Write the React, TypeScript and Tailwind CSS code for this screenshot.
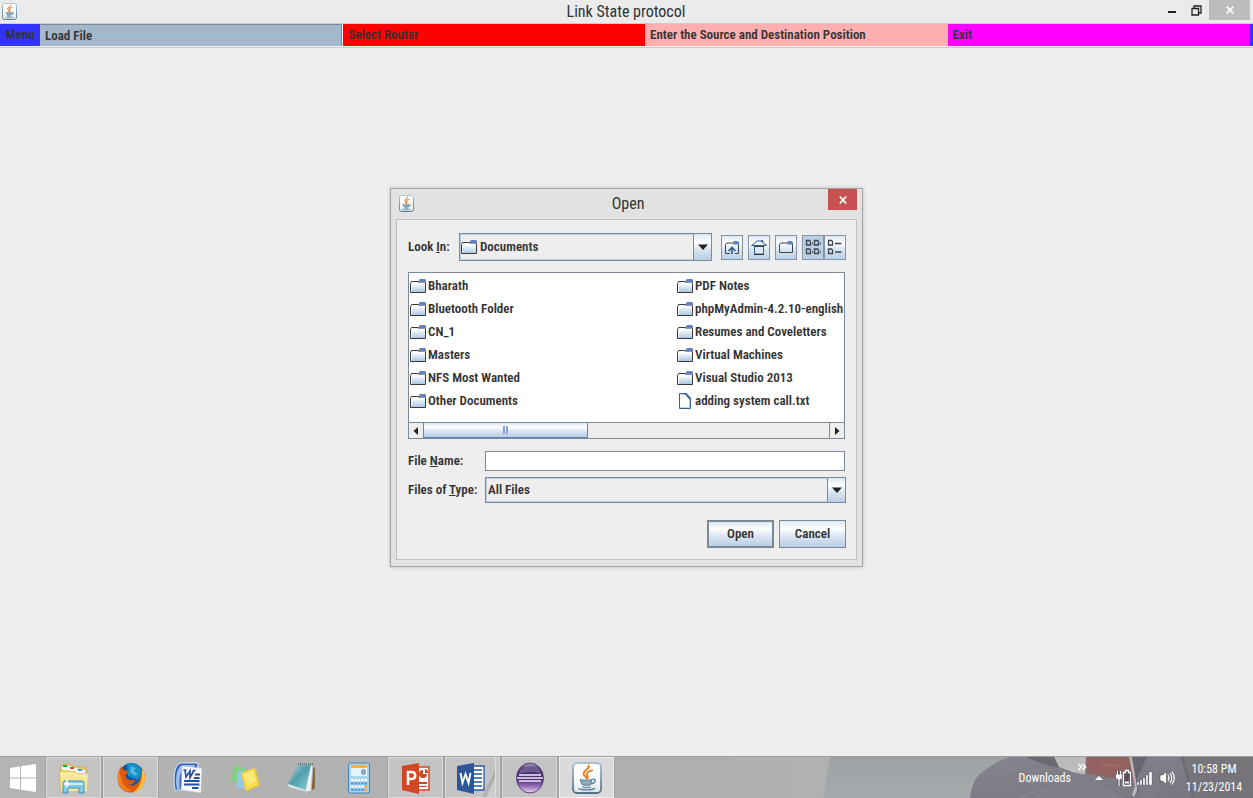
import type { ReactNode } from 'react';

const METAL = 'bg-[linear-gradient(180deg,#dde8f3_0%,#ffffff_30%,#dde8f3_55%,#b8cfe5_100%)]';
const SWING = "font-['Roboto_Condensed','Roboto',sans-serif] font-semibold text-[13px]";
const TITLE = "font-['Roboto_Condensed','Roboto',sans-serif] font-normal text-[16px] leading-6 text-[#333]";
const TRAY = "font-['Roboto_Condensed','Roboto',sans-serif] text-[12px] leading-[18px] text-white";

function JavaIcon({ className }: { className: string }) {
  return (
    <svg viewBox="0 0 30 32" className={className} preserveAspectRatio="none" aria-hidden="true">
      <defs>
        <linearGradient id="javaFace" x1="0" y1="0" x2="0" y2="1">
          <stop offset="0" stopColor="#ffffff" />
          <stop offset="0.6" stopColor="#fafafa" />
          <stop offset="1" stopColor="#dbe2e6" />
        </linearGradient>
        <linearGradient id="javaEdge" x1="0" y1="0" x2="0" y2="1">
          <stop offset="0" stopColor="#a9c0d0" />
          <stop offset="1" stopColor="#527086" />
        </linearGradient>
      </defs>
      <rect x="1" y="1" width="28" height="30" rx="4" fill="url(#javaFace)" stroke="url(#javaEdge)" strokeWidth="1.8" />
      <path d="M16.500 3.500c2 3.500-5 4.500-5 8 0 2 2.500 3 3 5M20 8.500c-3 .5-6 2.500-5 4.500.8 1.400 1.500 2 .3 3.500" fill="none" stroke="#ec7a1c" strokeWidth="1.900" strokeLinecap="round" />
      <path d="M8 17.500c3 1 9 1 12 0l-1 5c-2 1.200-7 1.200-9 0z" fill="#8fa9ba" stroke="#5b7f99" />
      <path d="M20.500 17.500c4-1 3.500 3.500-1 4.300" fill="none" stroke="#5b7f99" strokeWidth="1.500" />
      <path d="M10.500 24.800c2 1 6 1 8 0M7 26c-1 2.600 14 2.600 16 0" fill="none" stroke="#5b7f99" strokeWidth="1.300" />
    </svg>
  );
}

function FolderIcon() {
  return (
    <svg viewBox="0 0 16 14" className="h-3.5 w-4 shrink-0" aria-hidden="true">
      <defs>
        <linearGradient id="folderFill" x1="0" y1="0" x2="0" y2="1">
          <stop offset="0.15" stopColor="#ffffff" />
          <stop offset="1" stopColor="#a9c6e2" />
        </linearGradient>
      </defs>
      <path d="M.5 13.500V4.500L1.500 2.500h7l1 1h6v10z" fill="url(#folderFill)" stroke="#3a3a3a" />
      <path d="M1.500 12.500V5h13" fill="none" stroke="#fff" />
      <path d="M10 0h5l1 1v2H9V1z" fill="#6382bf" />
      <path d="M8 3.500h7.500" stroke="#8d98a8" />
    </svg>
  );
}

function FileIcon() {
  return (
    <svg viewBox="0 0 16 16" className="h-4 w-4 shrink-0" aria-hidden="true">
      <path d="M2.500.5h7l4 4.500v10.500h-11z" fill="#fff" stroke="#35618f" />
      <path d="M3.500 1.500h5M12.500 6v8.500h-9" fill="none" stroke="#b8cfe5" />
      <path d="M8.500 1l4.500 5" stroke="#35618f" strokeWidth="1.500" />
    </svg>
  );
}

function UpIcon() {
  return (
    <svg viewBox="0 0 16 15" className="h-[15px] w-4" aria-hidden="true">
      <path d="M6 13.500H1.500V4.500L3 3h6M14.500 4v9.500H11" fill="none" stroke="#444" />
      <path d="M9.500 1h4L15 2v2.500H9z" fill="#6382bf" />
      <path d="M8 14V7.500M4.500 11L8 7.500l3.500 3.500" fill="none" stroke="#35618f" strokeWidth="1.700" />
    </svg>
  );
}

function HomeIcon() {
  return (
    <svg viewBox="0 0 16 16" className="h-4 w-4" aria-hidden="true">
      <path d="M3.500 6.500h9v8.500h-9z" fill="#dce8f3" stroke="#35618f" />
      <path d="M3 15.500h10" stroke="#333" />
      <path d="M10.500 4V1.500h1.500v4" fill="#8ba6c8" stroke="#35618f" strokeWidth=".8" />
      <path d="M.5 6.500L6 2h4l5.500 4.500z" fill="#eaf2f9" stroke="#35618f" />
      <path d="M3 7.500h10" stroke="#444" />
    </svg>
  );
}

function NewFolderIcon() {
  return (
    <svg viewBox="0 0 16 14" className="h-3.5 w-4" aria-hidden="true">
      <path d="M1.500 12.500V4.500L3 3h6M14.500 4v8.500h-13" fill="none" stroke="#444" />
      <path d="M9.500 1h4L15 2v2.500H9z" fill="#6382bf" />
    </svg>
  );
}

function ListIcon() {
  return (
    <svg viewBox="0 0 16 16" className="h-4 w-4" aria-hidden="true">
      <path d="M1.500 1.500h3l1 1v3.500h-4zM9.500 1.500h3l1 1v3.500h-4zM1.500 10h3l1 1v3.500h-4zM9.500 10h3l1 1v3.500h-4zM7 4.500h1M15 4.500h1M7 13h1M15 13h1" fill="none" stroke="#3c444d" strokeWidth="1.300" />
    </svg>
  );
}

function DetailsIcon() {
  return (
    <svg viewBox="0 0 16 16" className="h-4 w-4" aria-hidden="true">
      <path d="M1.500 1.500h3l1 1v3.500h-4zM1.500 10h3l1 1v3.500h-4zM8 4.500h6.500M8 13h6.500" fill="none" stroke="#3c444d" strokeWidth="1.300" />
    </svg>
  );
}

function Triangle({ dir }: { dir: 'left' | 'right' | 'down' }) {
  const d = dir === 'left' ? 'M7 1v8L2.500 5z' : dir === 'right' ? 'M3 1v8l4.500-4z' : 'M0 2.500h10L5 8z';
  return (
    <svg viewBox="0 0 10 10" className="h-2.5 w-2.5" aria-hidden="true">
      <path d={d} fill="#222" />
    </svg>
  );
}

function ComboArrow() {
  return (
    <span className={`pointer-events-none absolute inset-y-0 right-0 flex w-[19px] items-center justify-center border border-[#7a8a99] ${METAL}`}>
      <Triangle dir="down" />
    </span>
  );
}

function ToolButton({ label, children, className = '' }: { label: string; children: ReactNode; className?: string }) {
  return (
    <button type="button" aria-label={label} className={`flex h-[25px] w-[22px] items-center justify-center border border-[#8595a5] ${className || METAL}`}>
      {children}
    </button>
  );
}

const leftFiles = ['Bharath', 'Bluetooth Folder', 'CN_1', 'Masters', 'NFS Most Wanted', 'Other Documents'];
const rightFiles = ['PDF Notes', 'phpMyAdmin-4.2.10-english', 'Resumes and Coveletters', 'Virtual Machines', 'Visual Studio 2013', 'adding system call.txt'];

function FileColumn({ names }: { names: string[] }) {
  return (
    <ul>
      {names.map((name) => (
        <li key={name} className="flex h-[23px] items-center gap-0.5 whitespace-nowrap">
          {name.endsWith('.txt') ? <FileIcon /> : <FolderIcon />}
          {name}
        </li>
      ))}
    </ul>
  );
}

function OpenDialog() {
  return (
    <section role="dialog" aria-label="Open" className="mt-[140px] flex w-[473px] flex-col border border-[#a5a5a5] bg-[#e2e2e2] px-[5px] pb-1.5 shadow-[0_0_4px_rgba(0,0,0,0.2)]">
      <header className="-mr-[5px] flex h-[30px] items-start pr-[5px]">
        <div className="flex flex-1 pl-[3px] pt-1.5">
          <JavaIcon className="h-[17px] w-[15px]" />
        </div>
        <h2 className={`pt-[3px] ${TITLE}`}>Open</h2>
        <div className="flex flex-1 justify-end">
          <button type="button" aria-label="Close dialog" className="flex h-[21px] w-[29px] items-center justify-center bg-[#c75050] text-white">
            <svg viewBox="0 0 8 8" className="h-2 w-2" aria-hidden="true">
              <path d="M.8.5l6.400 7M7.200.5l-6.400 7" stroke="currentColor" strokeWidth="1.700" />
            </svg>
          </button>
        </div>
      </header>
      <form className={`flex flex-col border border-[#c0c0c0] bg-[#eee] pb-[11px] pl-[11px] pr-2.5 pt-[13px] leading-4 text-[#333] ${SWING}`} onSubmit={(e) => e.preventDefault()}>
        <div className="flex items-center">
          <label htmlFor="look" className="w-[51px] whitespace-nowrap">Look <u>I</u>n:</label>
          <div className="relative flex-1">
            <select id="look" className="block h-7 w-full appearance-none border border-[#7a8a99] bg-[#eee] pl-5 shadow-[inset_0_0_0_1px_#b8cfe5] outline-none">
              <option>Documents</option>
            </select>
            <span className="pointer-events-none absolute inset-y-0 left-0.5 flex items-center"><FolderIcon /></span>
            <ComboArrow />
          </div>
          <div className="ml-[9px] flex gap-[5px]">
            <ToolButton label="Up one level"><UpIcon /></ToolButton>
            <ToolButton label="Home"><HomeIcon /></ToolButton>
            <ToolButton label="Create new folder"><NewFolderIcon /></ToolButton>
            <div className="flex">
              <ToolButton label="List" className="bg-[#b8cfe5]"><ListIcon /></ToolButton>
              <ToolButton label="Details"><DetailsIcon /></ToolButton>
            </div>
          </div>
        </div>
        <div className="mr-px mt-[11px] flex flex-col border border-[#7a8a99] bg-white">
          <div className="grid h-[149px] grid-cols-[267px_1fr] overflow-hidden pl-px pt-px">
            <FileColumn names={leftFiles} />
            <FileColumn names={rightFiles} />
          </div>
          <div className="flex h-4 border-t border-[#7a8a99] bg-[#eee]">
            <button type="button" aria-label="Scroll left" className="flex w-3.5 items-center justify-center"><Triangle dir="left" /></button>
            <div className="flex flex-1">
              <div className={`flex w-[165px] items-center justify-center gap-px border-x border-b border-[#6382bf] ${METAL}`}>
                <span className="h-2 w-0.5 bg-[#8aa4d6]" />
                <span className="h-2 w-0.5 bg-[#8aa4d6]" />
              </div>
            </div>
            <button type="button" aria-label="Scroll right" className="flex w-[15px] items-center justify-center border-l border-[#7a8a99]"><Triangle dir="right" /></button>
          </div>
        </div>
        <div className="mr-px mt-3 flex items-center">
          <label htmlFor="fname" className="w-[77px] whitespace-nowrap">File <u>N</u>ame:</label>
          <input id="fname" type="text" className="h-5 min-w-0 flex-1 border border-[#7a8a99] bg-white px-1 outline-none" />
        </div>
        <div className="mt-1.5 flex items-center">
          <label htmlFor="ftype" className="w-[77px] whitespace-nowrap">Files of <u>T</u>ype:</label>
          <div className="relative flex-1">
            <select id="ftype" className="block h-[26px] w-full appearance-none border border-[#7a8a99] bg-[#eee] pl-0.5 shadow-[inset_0_0_0_1px_#b8cfe5] outline-none">
              <option>All Files</option>
            </select>
            <ComboArrow />
          </div>
        </div>
        <div className="mt-[17px] flex justify-end gap-[5px]">
          <button type="submit" className={`h-7 w-[67px] border-2 border-[#7a8a99] ${METAL}`}>Open</button>
          <button type="button" className={`h-7 w-[67px] border border-[#7a8a99] ${METAL}`}>Cancel</button>
        </div>
      </form>
    </section>
  );
}

function ExplorerIcon() {
  return (
    <svg viewBox="0 0 30 32" className="h-8 w-[30px]" aria-hidden="true">
      <path d="M2 4l2-2h6l2 2h4l2 1h8l2 3v20H1V5z" fill="#e9cc62" stroke="#c8a640" strokeWidth=".7" />
      <path d="M3 4h9l1 4H3z" fill="#fff" /><path d="M4 3h4v2H4z" fill="#20ae32" />
      <path d="M10 6h8v3h-8z" fill="#fff" /><path d="M11 5h4v2h-4z" fill="#e4432d" />
      <path d="M17 8h9v3h-9z" fill="#fff" /><path d="M19 7h4v2h-4z" fill="#36a4df" />
      <path d="M1 10h14l3 2h11l-1 17H2z" fill="#f7e693" />
      <path d="M1 12h13l4 2h11" fill="none" stroke="#fff5bd" />
      <path d="M4 31V21q0-2 2-2h17q2 0 2 2v10h-5v-5H9v5z" fill="#83c8e6" stroke="#3e93be" />
      <path d="M5 21h19v2H5z" fill="#c9eef9" />
      <path d="M8 16l1 4 3 2-3 1-1 4-1-4-3-1 3-2z" fill="#fff" />
    </svg>
  );
}

function FirefoxIcon() {
  return (
    <svg viewBox="0 0 30 32" className="h-8 w-[30px]" aria-hidden="true">
      <ellipse cx="15.500" cy="15.500" rx="13" ry="14.500" fill="#14559c" />
      <path d="M11 2c8-3 14 2 15 10l-4 6-10-4z" fill="#168fc9" />
      <path d="M15 4l5 2-2 3 4 3-3 2-5-4z" fill="#53b6df" />
      <path d="M26 6c4 6 4 15-1 20-6 7-18 6-22-3C0 16 2 8 6 4l1 4 5 1c1 2-1 3-3 4l2 4c3 3 5 0 8 1.500-1 3.500-4 4.500-7 4 8 4 14-4 14-16.500z" fill="#e2590c" />
      <path d="M26 6c4 6 4 15-1 20-2 2.500-5 4-8 4.500 7-5 10-13 9-24.500z" fill="#ffc52e" />
      <path d="M3 9c2 3 1 6 3 9 1 5 4 9 10 10-8 4-17-5-13-19z" fill="#f58122" />
    </svg>
  );
}

function WordOldIcon() {
  return (
    <svg viewBox="0 0 30 32" className="h-8 w-[30px]" aria-hidden="true">
      <path d="M8 1h17l-3 27H2C0 15 1 3 8 1z" fill="#3560b0" stroke="#dfe9f7" />
      <path d="M9 3h13l-1 3H11C6 11 6 20 7 27H4C2 18 3 6 9 3z" fill="#9dbfec" />
      <path d="M9 4l20 2-1 25-20-3z" fill="#f7f9ff" stroke="#aebbd3" strokeWidth=".6" />
      <path d="M10.500 8h3M12 8l1 7 4-6 0 6.500 4-7M19.500 8.500h3" fill="none" stroke="#2351a2" strokeWidth="1.700" />
      <path d="M22 12.500h5M21 16h5.500M11 19h15.500M11 22.500h15.500M19 26h6.500" stroke="#2351a2" strokeWidth="1.800" />
    </svg>
  );
}

function StickyIcon() {
  return (
    <svg viewBox="0 0 30 32" className="h-8 w-[30px]" aria-hidden="true">
      <path d="M5 3l13 5-5 15L0 18z" fill="#83cf83" /><path d="M7 9h13v17H7z" fill="#92c8f2" />
      <path d="M11 11l14-5 4 17-13 6z" fill="#f5dc4f" stroke="#e9c338" /><path d="M13 12l10-4 3 11-8 5z" fill="#ffee91" opacity=".65" />
    </svg>
  );
}

function NotepadIcon() {
  return (
    <svg viewBox="0 0 30 32" className="h-8 w-[30px]" aria-hidden="true">
      <defs><linearGradient id="notepadFace" x2="1" y2="1"><stop stopColor="#c2e0e4" /><stop offset=".45" stopColor="#4f9eac" /><stop offset="1" stopColor="#8fd2dd" /></linearGradient></defs>
      <path d="M25 4l3 2v20l-6 5z" fill="#856743" /><path d="M23 3l3 1-2 26-6-1z" fill="#eef2f3" stroke="#a8b8bb" />
      <path d="M11 3h13l-6 25-17-6z" fill="url(#notepadFace)" stroke="#8ea9ad" strokeWidth=".5" />
      <path d="M1 22l17 6 3 2-19-5z" fill="#d7eef0" /><path d="M11 2h15" stroke="#697b7d" strokeWidth="2" strokeDasharray="1 1" />
    </svg>
  );
}

function CalcIcon() {
  return (
    <svg viewBox="0 0 24 32" className="h-8 w-6" aria-hidden="true">
      <rect x="1.500" y="1" width="21" height="30" rx="2" fill="#a9d4f1" stroke="#4484b8" /><path d="M4 3h16v3H4z" fill="#f0b441" />
      <path d="M4 6h16v8H4z" fill="#e6f3fb" /><path d="M15 8h3v4h-3zM15 10h3" fill="none" stroke="#56799b" />
      {[0, 1, 2, 3].map((r) => [0, 1, 2, 3, 4].map((c) => (
        <rect key={`${r}${c}`} x={4 + c * 3.4} y={17 + r * 3.2} width="2.500" height="2.300" fill={c === 4 && r > 1 ? '#f0a933' : r % 2 ? '#5d98c9' : '#f8fcff'} />
      )))}
    </svg>
  );
}

function PowerPointIcon() {
  return (
    <svg viewBox="0 0 30 32" className="h-8 w-[30px]" aria-hidden="true">
      <path d="M17 5h11v23H17z" fill="#fff" stroke="#d44a29" strokeWidth="1.500" />
      <path d="M22 8a4 4 0 1 0 4 4h-4z" fill="#d24625" /><path d="M24 7v4h3a4 4 0 0 0-3-4zM18 20h8v2h-8zM18 24h8v1h-8z" fill="#d24625" />
      <path d="M1 4l17-3v31L1 28z" fill="#d24625" />
      <path d="M7 23V10h3.500c5 0 5 7 0 7H7" fill="none" stroke="#fff" strokeWidth="2.500" />
    </svg>
  );
}

function WordIcon() {
  return (
    <svg viewBox="0 0 30 32" className="h-8 w-[30px]" aria-hidden="true">
      <path d="M16 4h12v24H16z" fill="#fff" stroke="#2b579a" strokeWidth="1.300" />
      <path d="M18 8h8M18 12h8M18 16h8M18 20h8M18 24h8" stroke="#2b579a" strokeWidth="1.600" />
      <path d="M1 4l17-3v31L1 28z" fill="#2b579a" />
      <path d="M4.500 11l2 10 3-9 3 9 2-10" fill="none" stroke="#fff" strokeWidth="1.900" />
    </svg>
  );
}

function EclipseIcon() {
  return (
    <svg viewBox="0 0 30 32" className="h-8 w-[30px]" aria-hidden="true">
      <defs><linearGradient id="eclipseFace" x2="0" y2="1"><stop stopColor="#b6a3cf" /><stop offset=".15" stopColor="#433066" /><stop offset=".55" stopColor="#4b2b75" /><stop offset=".8" stopColor="#9e76bf" /><stop offset="1" stopColor="#eedbf3" /></linearGradient></defs>
      <ellipse cx="15" cy="16" rx="13.500" ry="15" fill="url(#eclipseFace)" stroke="#5f437e" />
      <path d="M4 12Q5 3 15 2q10 1 11 10-11-4-22 0z" fill="#bba8cd" opacity=".35" />
      <path d="M4 13h22M2 16h26M4 19h22" stroke="#f3eef8" strokeWidth="1.300" />
    </svg>
  );
}

function TaskButton({ label, state = 'idle', children }: { label: string; state?: 'idle' | 'open' | 'stacked' | 'active'; children: ReactNode }) {
  const look = {
    idle: 'border-transparent',
    open: 'border-[#dadada] bg-[#c3c3c3] shadow-[0_0_0_1px_#a2a2a2]',
    stacked: 'border-[#dadada] bg-[linear-gradient(115deg,#c4c4c4_75%,#a9a9a9_79%,#cdcdcd_84%)] pr-1 shadow-[0_0_0_1px_#a2a2a2,inset_-3px_0_0_#c5c5c5,inset_-4px_0_0_#dedede]',
    active: 'border-[#f0f0f0] bg-[#dadada] shadow-[0_0_0_1px_#a2a2a2]',
  }[state];
  return (
    <button aria-label={label} className={`flex w-[55px] items-center justify-center border ${look}`}>
      {children}
    </button>
  );
}

function Wallpaper() {
  return (
    <svg viewBox="0 0 431 42" preserveAspectRatio="none" className="absolute inset-0 h-full w-full" aria-hidden="true">
      <defs>
        <linearGradient id="jacket" x2="1" y2="1"><stop stopColor="#85848f" /><stop offset="1" stopColor="#77757e" /></linearGradient>
        <linearGradient id="wall" x2="0" y2="1"><stop stopColor="#9da2a5" /><stop offset="1" stopColor="#a5aaad" /></linearGradient>
      </defs>
      <path d="M8 0h423v42H1z" fill="url(#wall)" />
      <path d="M148 42c2-16 6-24 20-32q10-8 22-10h241v42z" fill="url(#jacket)" />
      <path d="M232 0h32l-1 18q-14-2-26-8z" fill="#bcbcbb" /><path d="M204 0h28l5 11q-12-1-33-11z" fill="#615b63" opacity=".65" />
      <path d="M264 0h44l5 25-20-3-28-5z" fill="#946161" /><path d="M278 7q12-3 24 3-12 1-25 0z" fill="#a56a66" opacity=".6" />
      <path d="M307 0h3l6 32-4 9-2-2 3-9z" fill="#b9b7bb" /><path d="M310 0h16l-9 20 3 12-4 5z" fill="#686670" />
      <path d="M325 0l-10 23 3 19h15l5-18z" fill="#7d7c87" />
      <path d="M196 42q40-9 78-17l28 17z" fill="#817f89" /><path d="M262 25q-28 3-66 17" fill="none" stroke="#94919a" opacity=".5" />
      <path d="M167 17q25-8 52 2M185 22q25 3 42 14" fill="none" stroke="#908e98" opacity=".3" strokeWidth="2" />
      <path d="M359 0h72v42h-60z" fill="#747377" opacity=".75" /><path d="M360 0l11 42" stroke="#625f67" opacity=".5" strokeWidth="2" />
    </svg>
  );
}

function Taskbar() {
  return (
    <footer className="flex h-[42px] items-stretch border-t border-[#9d9d9d] bg-[linear-gradient(90deg,#b4b4b4,#afafaf_55%,#b7b7b7)]">
      <button aria-label="Start" className="flex w-[46px] items-center justify-center">
        <svg viewBox="0 0 26 28" className="h-7 w-[26px]" aria-hidden="true">
          <path d="M0 4l10-1.500V13.500H0zM11 2.300L26 0v13.500H11zM0 14.500h10v11L0 24zM11 14.500h15V28l-15-2.300z" fill="#fff" />
        </svg>
      </button>
      <nav aria-label="Taskbar" className="flex gap-0.5">
        <TaskButton label="File Explorer" state="open"><ExplorerIcon /></TaskButton>
        <TaskButton label="Firefox" state="open"><FirefoxIcon /></TaskButton>
        <TaskButton label="Word 2007"><WordOldIcon /></TaskButton>
        <TaskButton label="Sticky Notes"><StickyIcon /></TaskButton>
        <TaskButton label="Notepad"><NotepadIcon /></TaskButton>
        <TaskButton label="Calculator"><CalcIcon /></TaskButton>
        <TaskButton label="PowerPoint" state="open"><PowerPointIcon /></TaskButton>
        <TaskButton label="Word" state="stacked"><WordIcon /></TaskButton>
        <TaskButton label="Eclipse" state="open"><EclipseIcon /></TaskButton>
        <TaskButton label="Java" state="active"><JavaIcon className="h-8 w-[30px]" /></TaskButton>
      </nav>
      <div className={`relative ml-auto flex w-[431px] justify-end overflow-hidden ${TRAY}`}>
        <Wallpaper />
        <div className="relative flex items-stretch pr-3">
          <span className="self-center">Downloads</span>
          <button aria-label="More downloads" className="ml-1.5 self-start pt-1">
            <svg viewBox="0 0 10 8" className="mt-0.5 h-2 w-2.5" aria-hidden="true"><path d="M1.500 1l3 3-3 3M5.500 1l3 3-3 3" fill="none" stroke="#fff" strokeWidth="1.500" /></svg>
          </button>
          <div className="ml-2 flex items-center gap-1.5">
            <svg viewBox="0 0 8 5" className="mr-1.5 h-[5px] w-2" aria-hidden="true"><path d="M0 5l4-4 4 4z" fill="#fff" /></svg>
            <svg viewBox="0 0 16 18" className="h-[18px] w-4" aria-hidden="true">
              <path d="M2.500 2v4M5.500 2v4M4 9v8" stroke="#444" strokeWidth="3" />
              <path d="M2.500 2v4M5.500 2v4M4 9v8" stroke="#fff" strokeWidth="1.300" />
              <path d="M1 5.500h6v3.500l-2 1.500H3L1 9z" fill="#fff" />
              <path d="M10.500 1.500h3v2h2V16.500h-7V3.500h2z" fill="#55505a" stroke="#fff" strokeWidth="1.300" /><path d="M10 12.500h4v2h-4z" fill="#fff" />
            </svg>
            <svg viewBox="0 0 16 14" className="h-3.5 w-4" aria-hidden="true">
              <path d="M0 11h2v3H0zM3 9h2v5H3zM6 7h2v7H6zM9 4h2v10H9zM12 1h3v13h-3z" fill="#fff" stroke="#3d3b42" strokeWidth=".3" />
            </svg>
            <svg viewBox="0 0 16 16" className="h-4 w-4" aria-hidden="true">
              <path d="M1 5h2.500L7.500 1.500v13L3.500 11H1z" fill="#fff" stroke="#444" strokeWidth=".6" />
              <path d="M9 5q2 3 0 6M11 3q3.500 5 0 10M13 1.500q4.500 6.500 0 13" fill="none" stroke="#fff" strokeWidth="1.200" />
            </svg>
          </div>
          <time className="ml-3 flex w-[54px] flex-col items-center justify-center whitespace-nowrap"><span>10:58 PM</span><span>11/23/2014</span></time>
        </div>
      </div>
    </footer>
  );
}

export default function App() {
  return (
    <div className="flex min-h-screen flex-col bg-[#eee]">
      <header className="flex h-[23px] items-start bg-[#ebebeb]">
        <div className="flex flex-1 pl-0.5 pt-[3px]"><JavaIcon className="h-[17px] w-[15px]" /></div>
        <h1 className={TITLE}>Link State protocol</h1>
        <div className="flex flex-1 items-start justify-end pr-[3px]">
          <button aria-label="Minimize" className="flex h-5 w-6 items-end justify-center pb-[7px]"><span className="h-0.5 w-2 bg-[#222]" /></button>
          <button aria-label="Restore" className="mr-px flex h-5 w-6 items-center justify-center">
            <svg viewBox="0 0 11 11" className="h-[11px] w-[11px]" aria-hidden="true"><path d="M1 3.500h6.500v6.500H1zM3 3V1h7v7H8" fill="none" stroke="#222" strokeWidth="1.300" /></svg>
          </button>
          <button aria-label="Close" className="flex h-5 w-[41px] items-center justify-center bg-[#bcbcbc] text-white">
            <svg viewBox="0 0 8 8" className="h-2 w-2" aria-hidden="true"><path d="M.8.5l6.400 7M7.200.5l-6.400 7" stroke="currentColor" strokeWidth="1.700" /></svg>
          </button>
        </div>
      </header>
      <nav aria-label="Main menu" className={`grid h-[25px] grid-cols-[40px_repeat(4,1fr)_3px] border-b border-t border-[#ccc] bg-[#eee] pb-px leading-[22px] text-[#333] ${SWING}`}>
        <button className="bg-[#3333ff] text-center">Menu</button>
        <button className="mr-px border-r border-t border-[#7a8a99] bg-[#a3b8cc] pl-[5px] text-left leading-5">Load File</button>
        <button className="bg-[#ff0000] pl-1.5 text-left">Select Router</button>
        <button className="bg-[#ffafaf] pl-[5px] text-left">Enter the Source and Destination Position</button>
        <button className="bg-[#ff00ff] pl-[5px] text-left">Exit</button>
        <span className="bg-[#3333ff]" />
      </nav>
      <main className="flex flex-1 items-start justify-center">
        <OpenDialog />
      </main>
      <Taskbar />
    </div>
  );
}
